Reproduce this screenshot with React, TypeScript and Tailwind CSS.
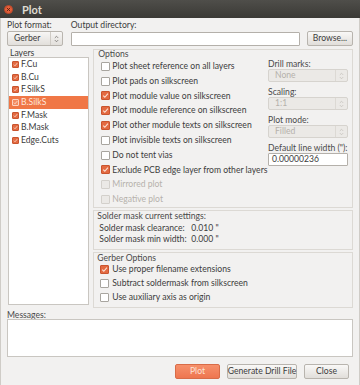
import React from "react";

function Check({ checked = false, disabled = false, size = 9, onOrange = false }: { checked?: boolean; disabled?: boolean; size?: number; onOrange?: boolean }) {
  let cls = "border-[#a8a59f] bg-white";
  if (checked) cls = "border-[#c9552f] bg-[#e36a41]";
  if (onOrange) cls = "border-[#fbd3c2] bg-[#f38a5f]";
  if (disabled) cls = "border-[#d3d0cb] bg-[#ebe9e6]";
  return (
    <span
      className={`shrink-0 flex items-center justify-center border rounded-[1px] ${cls}`}
      style={{ width: size, height: size }}
    >
      {(checked || onOrange) && (
        <svg viewBox="0 0 8 8" className="w-full h-full">
          <path d="M1.4 4.2 L3.2 6 L6.8 1.8" fill="none" stroke={onOrange ? "#fde3d7" : "#fbe1d4"} strokeWidth="1.3" />
        </svg>
      )}
    </span>
  );
}

function Arrows({ color }: { color: string }) {
  return (
    <svg viewBox="0 0 6 9" className="w-[5px] h-[8px]">
      <path d="M1 3.2 L3 1.2 L5 3.2" fill="none" stroke={color} strokeWidth="0.9" />
      <path d="M1 5.8 L3 7.8 L5 5.8" fill="none" stroke={color} strokeWidth="0.9" />
    </svg>
  );
}

function Combo({ value, disabled = false, h = "h-[13px]" }: { value: string; disabled?: boolean; h?: string }) {
  return (
    <div
      className={`${h} flex items-center border rounded-[2px] ${
        disabled
          ? "border-[#d6d3ce] bg-[#ebe9e6] text-[#b5b1ab]"
          : "border-[#b9b5af] bg-gradient-to-b from-[#f7f6f5] to-[#e2dfdb] text-[#3c3c3c]"
      }`}
    >
      <span className="flex-1 pl-[6px]">{value}</span>
      <span className={`h-full w-[12px] flex items-center justify-center border-l ${disabled ? "border-[#dcd9d4]" : "border-[#cfcbc5]"}`}>
        <Arrows color={disabled ? "#c3bfb9" : "#6b6964"} />
      </span>
    </div>
  );
}

function Btn({ label, w, primary = false }: { label: string; w: string; primary?: boolean }) {
  return (
    <div
      className={`${w} h-[15px] flex items-center justify-center rounded-[2px] border ${
        primary
          ? "border-[#d86c48] bg-gradient-to-b from-[#f6906b] to-[#ee7650] text-[#fde2d6]"
          : "border-[#b8b4ae] bg-gradient-to-b from-[#f9f8f7] to-[#e1deda] text-[#3c3c3c]"
      }`}
    >
      {label}
    </div>
  );
}

const layers = ["F.Cu", "B.Cu", "F.SilkS", "B.SilkS", "F.Mask", "B.Mask", "Edge.Cuts"];

const options: [string, boolean, boolean][] = [
  ["Plot sheet reference on all layers", false, false],
  ["Plot pads on silkscreen", false, false],
  ["Plot module value on silkscreen", true, false],
  ["Plot module reference on silkscreen", true, false],
  ["Plot other module texts on silkscreen", true, false],
  ["Plot invisible texts on silkscreen", false, false],
  ["Do not tent vias", false, false],
  ["Exclude PCB edge layer from other layers", true, false],
  ["Mirrored plot", false, true],
  ["Negative plot", false, true],
];

export default function App() {
  return (
    <div className="w-[360px] h-[385px] overflow-hidden bg-[#f2f1f0] font-['Lato',sans-serif] text-[8.6px] leading-none whitespace-nowrap text-[#3c3c3c] flex flex-col">
      {/* Title bar */}
      <div className="h-[18px] shrink-0 flex items-center bg-gradient-to-b from-[#4f4e4a] to-[#3b3a36]">
        <span className="ml-[4px] w-[9px] h-[9px] rounded-full bg-[#e5603a] border border-[#b8472a] flex items-center justify-center">
          <svg viewBox="0 0 6 6" className="w-[5px] h-[5px]">
            <path d="M1 1 L5 5 M5 1 L1 5" stroke="#5a2213" strokeWidth="1.1" />
          </svg>
        </span>
        <span className="ml-[9px] text-[11px] font-bold text-[#dfdbd2]">Plot</span>
      </div>

      <div className="flex-1 flex flex-col px-[6px] border-x border-[#cfccc7]">
        {/* Format / output row */}
        <div className="mt-[2px] flex items-end">
          <div className="w-[56px] flex flex-col">
            <span className="h-[11px] leading-[11px]">Plot format:</span>
            <Combo value="Gerber" h="h-[15px]" />
          </div>
          <div className="ml-[8px] w-[230px] flex flex-col">
            <span className="h-[12px] leading-[11px]">Output directory:</span>
            <div className="h-[14px] border border-[#b4b0aa] bg-white rounded-[1px]" />
          </div>
          <div className="ml-[7px]">
            <Btn label="Browse..." w="w-[46px]" />
          </div>
        </div>

        {/* Main */}
        <div className="mt-[3px] flex">
          {/* Layers */}
          <div className="ml-[1px] w-[82px] flex flex-col">
            <span className="h-[8px] leading-[9px] pl-[2px]">Layers</span>
            <div className="h-[248px] border border-[#c9c6c1] bg-white flex flex-col">
              {layers.map((l, i) => (
                <div
                  key={l}
                  className={`h-[12.7px] flex items-center gap-[2px] pl-[3px] ${i === 3 ? "bg-[#f07746] text-[#fde6dc]" : ""}`}
                >
                  <Check checked={i !== 3} onOrange={i === 3} size={7} />
                  <span>{l}</span>
                </div>
              ))}
            </div>
          </div>

          {/* Options side */}
          <div className="ml-[4px] w-[262px] flex flex-col">
            <div className="h-[159px] border border-[#dcd9d4] flex flex-col">
              <span className="h-[9px] leading-[9px] pl-[4px] text-[#4a4a4a]">Options</span>
              <div className="flex">
                <div className="flex-1 min-w-0 flex flex-col pl-[7px]">
                  {options.map(([t, c, d]) => (
                    <div key={t} className={`h-[14.8px] flex items-center gap-[2px] ${d ? "text-[#b6b2ac]" : ""}`}>
                      <Check checked={c} disabled={d} />
                      <span>{t}</span>
                    </div>
                  ))}
                </div>
                <div className="w-[80px] shrink-0 mr-[4px] flex flex-col gap-[5px] text-[#4a4a4a]">
                  <div className="flex flex-col">
                    <span className="h-[10px] leading-[10px]">Drill marks:</span>
                    <Combo value="None" disabled />
                  </div>
                  <div className="flex flex-col">
                    <span className="h-[10px] leading-[10px]">Scaling:</span>
                    <Combo value="1:1" disabled />
                  </div>
                  <div className="flex flex-col">
                    <span className="h-[10px] leading-[10px]">Plot mode:</span>
                    <Combo value="Filled" disabled />
                  </div>
                  <div className="flex flex-col">
                    <span className="h-[10px] leading-[10px]">Default line width ("):</span>
                    <div className="h-[13px] border border-[#b4b0aa] bg-white rounded-[1px] flex items-center pl-[3px] text-[#3c3c3c]">
                      0.00000236
                    </div>
                  </div>
                </div>
              </div>
            </div>

            <div className="mt-[2px] h-[40px] border border-[#dcd9d4] flex flex-col">
              <span className="h-[10px] leading-[10px] pl-[3px] text-[#4a4a4a]">Solder mask current settings:</span>
              <div className="mt-[2px] h-[11px] flex items-center pl-[5px]">
                <span className="w-[92px]">Solder mask clearance:</span>
                <span>0.010 "</span>
              </div>
              <div className="h-[11px] flex items-center pl-[5px]">
                <span className="w-[92px]">Solder mask min width:</span>
                <span>0.000 "</span>
              </div>
            </div>

            <div className="mt-[2px] h-[56px] border border-[#dcd9d4] flex flex-col">
              <span className="h-[9px] leading-[10px] pl-[3px] text-[#4a4a4a]">Gerber Options</span>
              {[
                ["Use proper filename extensions", true],
                ["Subtract soldermask from silkscreen", false],
                ["Use auxiliary axis as origin", false],
              ].map(([t, c]) => (
                <div key={t as string} className="h-[14px] flex items-center gap-[3px] pl-[6px]">
                  <Check checked={c as boolean} />
                  <span>{t as string}</span>
                </div>
              ))}
            </div>
          </div>
        </div>

        {/* Messages */}
        <span className="mt-[3px] h-[8px] leading-[8px] text-[#4a4a4a]">Messages:</span>
        <div className="h-[38px] border border-[#c9c6c1] bg-white" />

        {/* Buttons */}
        <div className="mt-[7px] mr-[4px] flex justify-end gap-[7px]">
          <Btn label="Plot" w="w-[45px]" primary />
          <Btn label="Generate Drill File" w="w-[70px]" />
          <Btn label="Close" w="w-[45px]" />
        </div>
      </div>
    </div>
  );
}
